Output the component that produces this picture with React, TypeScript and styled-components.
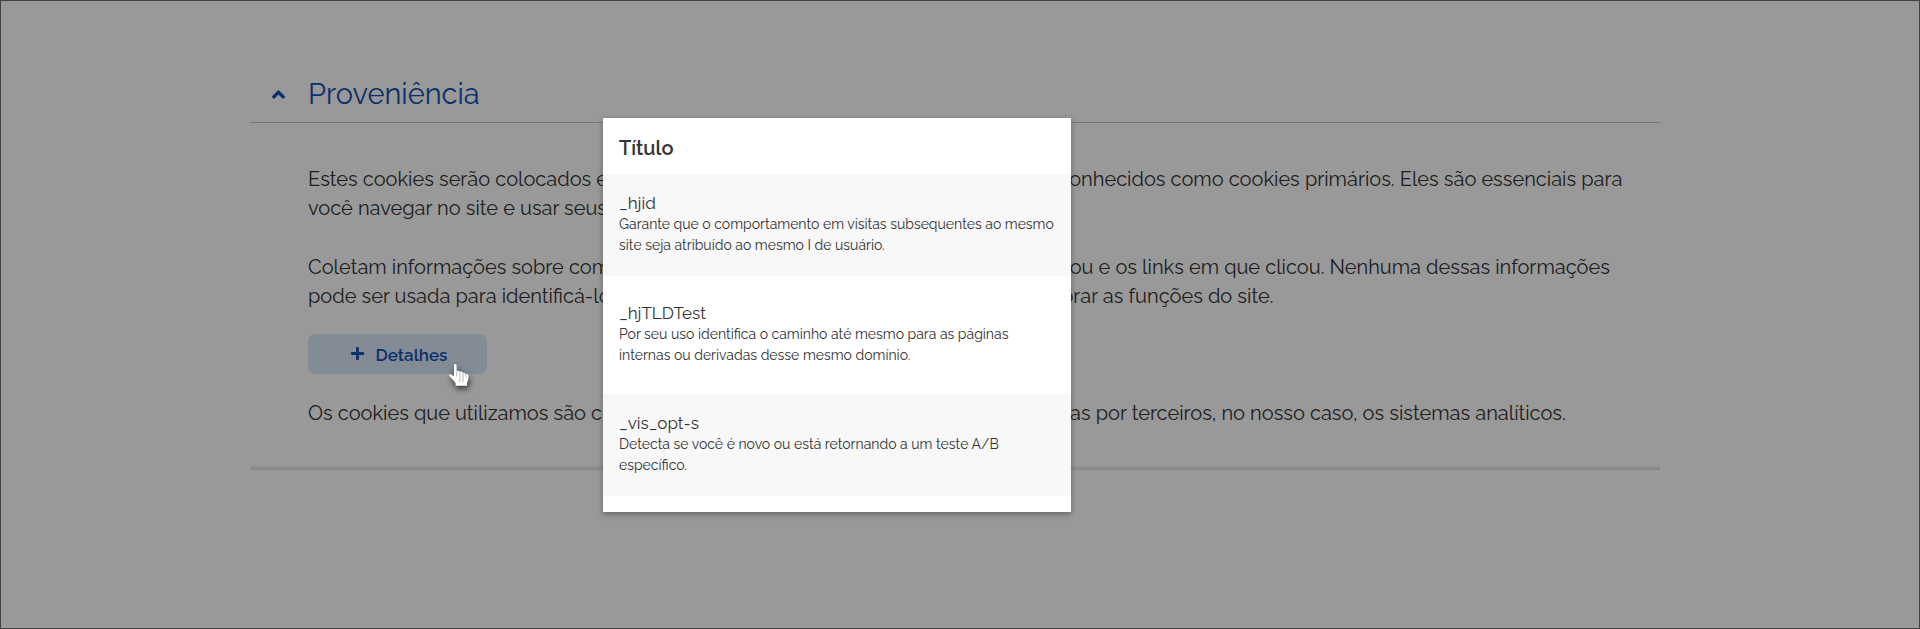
import React from 'react';
import styled, { createGlobalStyle } from 'styled-components';
import { FaAngleUp, FaPlus } from 'react-icons/fa';

const GlobalStyle = createGlobalStyle`
  *, *::before, *::after { box-sizing: border-box; }
  body {
    margin: 0;
    background: #fff;
    color: #333;
    font-family: Raleway, Inter, sans-serif;
  }
`;

const Page = styled.div`
  position: relative;
  min-height: 100vh;
  padding: 71px 259px 71px 249px;
  border: 1px solid #707070;
`;

const Section = styled.section`
  background: linear-gradient(to top, rgba(0, 0, 0, 0.14), transparent) bottom / 100% 5px no-repeat;
`;

const SectionHeader = styled.h2`
  margin: 0;
  border-bottom: 1px solid #c8c8c8;
`;

const Toggle = styled.button`
  display: flex;
  align-items: center;
  width: 100%;
  height: 50px;
  padding: 0 0 6px 22px;
  gap: 23px;
  border: 0;
  background: none;
  color: #1351b4;
  font-family: inherit;
  font-size: 29px;
  line-height: 36px;
  font-weight: 400;
  text-align: left;

  svg {
    width: 13px;
    height: 21px;
  }
`;

const Content = styled.div`
  padding: 42px 0 42px 58px;
`;

const Paragraph = styled.p`
  margin: 0 0 30px;
  font-size: 20px;
  line-height: 29px;
  font-weight: 400;
  white-space: nowrap;
  &:last-child { margin: 0; }
`;

const Actions = styled.div`
  position: relative;
  width: 179px;
  margin: -7px 0 25px;
`;

const DetailsButton = styled.button`
  display: flex;
  align-items: center;
  justify-content: center;
  gap: 11px;
  width: 100%;
  height: 40px;
  padding: 2px 0 0 2px;
  border: 0;
  border-radius: 8px;
  background: #dbe8fb;
  color: #1351b4;
  font-family: inherit;
  font-size: 17px;
  font-weight: 600;

  svg {
    width: 15px;
    height: 15px;
    margin-bottom: 4px;
  }
`;

const Backdrop = styled.div`
  position: absolute;
  inset: -1px;
  background: rgba(0, 0, 0, 0.4);
`;

const Pointer = styled.svg`
  position: absolute;
  z-index: 1;
  top: 30px;
  left: 141px;
  width: 20px;
  height: 22px;
  overflow: visible;
  filter: drop-shadow(1px 3px 3px rgba(0, 0, 0, 0.7));
`;

const Dialog = styled.div`
  position: absolute;
  top: 117px;
  left: 602px;
  width: 468px;
  padding-bottom: 16px;
  background: #fff;
  box-shadow: 0 2px 6px rgba(0, 0, 0, 0.35);
`;

const DialogTitle = styled.h3`
  margin: 0;
  padding: 18px 16px 14px;
  font-size: 20px;
  line-height: 24px;
  font-weight: 600;
`;

const CookieList = styled.dl`
  display: grid;
  gap: 8px;
  margin: 0;
`;

const CookieItem = styled.div<{ $shaded?: boolean }>`
  padding: 20px 14px 20px 16px;
  background: ${({ $shaded }) => ($shaded ? '#f8f8f8' : '#fff')};
`;

const CookieName = styled.dt`
  margin-bottom: 2px;
  font-size: 17px;
  line-height: 18px;
  font-weight: 400;
`;

const CookieText = styled.dd`
  margin: 0;
  font-size: 14px;
  line-height: 21px;
  font-weight: 400;
`;

const cookies = [
  { name: '_hjid', text: 'Garante que o comportamento em visitas subsequentes ao mesmo site seja atribuído ao mesmo I de usuário.' },
  { name: '_hjTLDTest', text: 'Por seu uso identifica o caminho até mesmo para as páginas internas ou derivadas desse mesmo domínio.' },
  { name: '_vis_opt-s', text: 'Detecta se você é novo ou está retornando a um teste A/B específico.' },
];

export default function App() {
  return (
    <Page>
      <GlobalStyle />
      <Section>
        <SectionHeader>
          <Toggle type="button" aria-expanded="true">
            <FaAngleUp aria-hidden />
            Proveniência
          </Toggle>
        </SectionHeader>
        <Content>
          <Paragraph>
            Estes cookies serão colocados em seu navegador diretamente via este site e são conhecidos como cookies primários. Eles são essenciais para
            <br />
            você navegar no site e usar seus recursos.
          </Paragraph>
          <Paragraph>
            Coletam informações sobre como você utiliza o nosso site, quais páginas você visitou e os links em que clicou. Nenhuma dessas informações
            <br />
            pode ser usada para identificá-lo. São dados anônimos cujo maior objetivo é melhorar as funções do site.
          </Paragraph>
          <Actions>
            <DetailsButton type="button">
              <FaPlus aria-hidden />
              Detalhes
            </DetailsButton>
            <Pointer viewBox="0 0 20 22" aria-hidden>
              <path
                fill="#fff"
                d="M5 1.2Q5 0 6.2 0T7.6 1.2V7.4L8.2 6.8Q9.5 6.4 10.6 7.2V8L11.4 7.6Q12.8 7.4 13.8 8.2V9L14.6 8.7Q15.8 8.5 16.6 9.4V10.2Q18.2 9.6 19.4 10.6V15.6L18 19V21.8H6.6V19.2L3 14.8L0 11.6Q.2 10 2 10.4L5 12.6Z"
              />
              <path stroke="#858585" strokeWidth="0.6" d="M7.7 8V12.5M10.9 8.5V18M14 9.5V18M17 10.5V13" />
            </Pointer>
          </Actions>
          <Paragraph>
            Os cookies que utilizamos são criados pelo próprio site ou via plataformas fornecidas por terceiros, no nosso caso, os sistemas analíticos.
          </Paragraph>
        </Content>
      </Section>
      <Backdrop />
      <Dialog role="dialog" aria-labelledby="cookies-title">
        <DialogTitle id="cookies-title">Título</DialogTitle>
        <CookieList>
          {cookies.map(({ name, text }, index) => (
            <CookieItem key={name} $shaded={index % 2 === 0}>
              <CookieName>{name}</CookieName>
              <CookieText>{text}</CookieText>
            </CookieItem>
          ))}
        </CookieList>
      </Dialog>
    </Page>
  );
}
